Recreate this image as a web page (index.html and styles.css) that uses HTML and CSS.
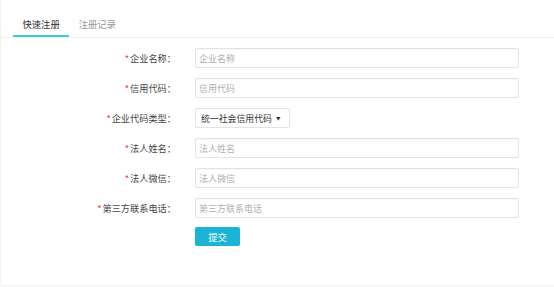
FILE: index.html
```html
<!DOCTYPE html>
<html lang="zh-CN">
<head>
  <meta charset="UTF-8" />
  <meta name="viewport" content="width=device-width, initial-scale=1.0" />
  <title>快速注册</title>
  <link rel="stylesheet" href="styles.css">
</head>
<body>
  <div class="page">
    <nav class="tabs">
      <div class="tab active">快速注册</div>
      <div class="tab">注册记录</div>
    </nav>

    <form class="form" onsubmit="return false">
      <label class="label"><i>*</i>企业名称：</label>
      <input class="input" type="text" placeholder="企业名称" />

      <label class="label"><i>*</i>信用代码：</label>
      <input class="input" type="text" placeholder="信用代码" />

      <label class="label"><i>*</i>企业代码类型：</label>
      <div class="select">
        <span>统一社会信用代码</span>
        <span class="arrow">▼</span>
      </div>

      <label class="label"><i>*</i>法人姓名：</label>
      <input class="input" type="text" placeholder="法人姓名" />

      <label class="label"><i>*</i>法人微信：</label>
      <input class="input" type="text" placeholder="法人微信" />

      <label class="label"><i>*</i>第三方联系电话：</label>
      <input class="input" type="text" placeholder="第三方联系电话" />

      <div></div>
      <div class="actions"><button class="submit-btn" type="submit">提交</button></div>
    </form>
  </div>
</body>
</html>
```

FILE: styles.css
```css
:root {
  --primary: #1cb4d4;
  --tab-line: #3ec6dd;
  --text: #444;
  --muted: #999;
  --border: #e3e3e3;
  --required: #e5383b;
}

body {
  margin: 0;
  font-family: "Noto Sans CJK SC", "Noto Sans", sans-serif;
  background: #fff;
  color: var(--text);
}

.page {
  height: 286px;
  border-left: 1px solid #f2f2f2;
  border-bottom: 1px solid #f2f2f2;
  box-sizing: border-box;
}

.tabs {
  display: flex;
  padding: 14px 0 0 12px;
  border-bottom: 1px solid #f0f0f0;
}

.tab {
  padding: 0 9.5px 1px;
  line-height: 20px;
  font-size: 9.3px;
  color: var(--muted);
  border-bottom: 2px solid transparent;
}

.tab.active {
  color: #333;
  border-bottom-color: var(--tab-line);
}

.form {
  display: grid;
  grid-template-columns: 175px 324px;
  grid-auto-rows: 20px;
  column-gap: 19px;
  row-gap: 10px;
  margin-top: 10px;
}

.label {
  align-self: center;
  text-align: right;
  font-size: 9.2px;
  color: var(--text);
}

.label i {
  font-style: normal;
  color: var(--required);
  margin-right: 1px;
}

.input {
  box-sizing: border-box;
  height: 20px;
  width: 100%;
  margin: 0;
  padding: 0 3px;
  border: 1px solid var(--border);
  border-radius: 2px;
  box-shadow: inset 0 1px 1px rgba(0,0,0,0.03);
  font-family: inherit;
  font-size: 9px;
  color: var(--text);
  outline: none;
}

.input::placeholder {
  color: #b0b0b0;
}

.select {
  box-sizing: border-box;
  width: 95px;
  height: 20px;
  display: flex;
  align-items: center;
  gap: 4px;
  padding: 0 5px;
  border: 1px solid var(--border);
  border-radius: 2px;
  font-size: 8.9px;
  color: #333;
}

.arrow {
  font-size: 4.5px;
  color: #333;
}

.actions {
  display: flex;
  align-items: flex-start;
}

.submit-btn {
  width: 45px;
  height: 19px;
  margin-top: -1px;
  padding: 0;
  border: none;
  border-radius: 2px;
  background: var(--primary);
  color: #fff;
  font-family: inherit;
  font-size: 9.3px;
  cursor: pointer;
}
```
